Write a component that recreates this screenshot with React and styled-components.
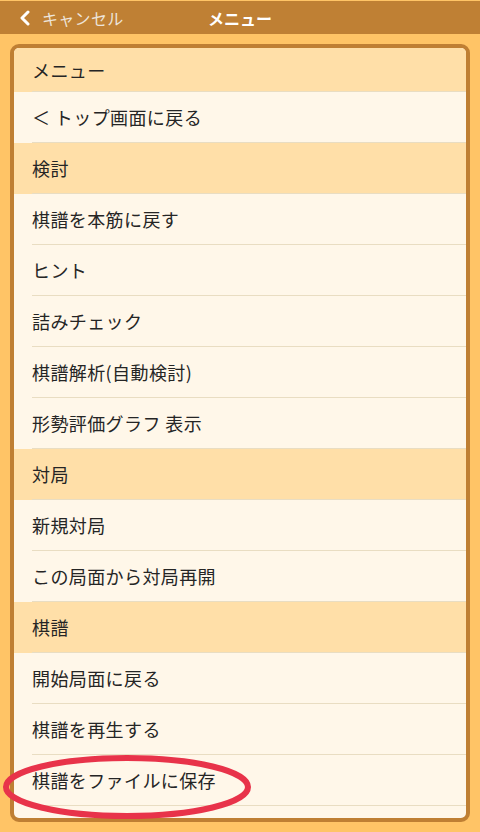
import React from 'react'
import styled, { createGlobalStyle } from "styled-components";

const GlobalStyle = createGlobalStyle`
    html, body {
        margin: 0;
        padding: 0;
        background: #FFC466;
    }
    body {
        font-family: "Noto Sans CJK JP", "Noto Sans", sans-serif;
    }
`;

const sections = [
    { title: "メニュー", short: true, items: ["＜ トップ画面に戻る"] },
    { title: "検討", items: ["棋譜を本筋に戻す", "ヒント", "詰みチェック", "棋譜解析(自動検討)", "形勢評価グラフ 表示"] },
    { title: "対局", items: ["新規対局", "この局面から対局再開"] },
    { title: "棋譜", items: ["開始局面に戻る", "棋譜を再生する", "棋譜をファイルに保存"] },
];

function App() {
    return (
        <>
        <GlobalStyle />
        <Page>
            <NavBar>
                <Back>
                    <svg width="12" height="16" viewBox="0 0 12 16">
                        <polyline points="9,2 3,8 9,14" fill="none" stroke="#fff" strokeWidth="3" strokeLinecap="round" strokeLinejoin="round" />
                    </svg>
                    <BackText>キャンセル</BackText>
                </Back>
                <Title>メニュー</Title>
            </NavBar>
            <Panel>
                <List>
                    {sections.map((section) => (
                        <React.Fragment key={section.title}>
                            <Row $header>
                                <Label $short={section.short}>{section.title}</Label>
                            </Row>
                            {section.items.map((item) => (
                                <Row key={item}>
                                    <Label>{item}</Label>
                                </Row>
                            ))}
                        </React.Fragment>
                    ))}
                </List>
            </Panel>
            <Circle width="256" height="72" viewBox="0 0 256 72">
                <ellipse cx="127" cy="36" rx="121" ry="29" fill="none" stroke="#E8334A" strokeWidth="6" />
            </Circle>
        </Page>
        </>
    );
}

export default App;

const Page = styled.div`
    position: relative;
    width: 480px;
    height: 832px;
    overflow: hidden;
    background: #FFC466;
    padding-top: 1px;
    box-sizing: border-box;
`;
const NavBar = styled.header`
    position: relative;
    height: 33px;
    background: #BF8034;
    display: flex;
    align-items: center;
    justify-content: center;
`;
const Back = styled.div`
    position: absolute;
    left: 19px;
    top: 0;
    bottom: 0;
    display: flex;
    align-items: center;
    gap: 11px;
`;
const BackText = styled.span`
    font-size: 16px;
    color: #EDE4DA;
    letter-spacing: 0.3px;
`;
const Title = styled.h1`
    margin: 0;
    font-size: 16px;
    font-weight: 700;
    color: #fff;
`;
const Panel = styled.section`
    margin: 10px 10px 0;
    height: 778px;
    box-sizing: border-box;
    border: 4px solid #BF7F33;
    border-radius: 9px;
    background: #FFF7E9;
    overflow: hidden;
`;
const List = styled.ul`
    list-style: none;
    margin: 0;
    padding: 0;
`;
const Row = styled.li`
    padding-left: 18px;
    background: ${(p) => (p.$header ? "#FFDFA8" : "#FFF7E9")};
`;
const Label = styled.div`
    height: ${(p) => (p.$short ? "43px" : "50px")};
    display: flex;
    align-items: center;
    border-bottom: 1px solid #E9DDC2;
    font-size: 18px;
    letter-spacing: 0.4px;
    color: #252525;
    white-space: nowrap;
`;
const Circle = styled.svg`
    position: absolute;
    left: 0;
    top: 751px;
`;
